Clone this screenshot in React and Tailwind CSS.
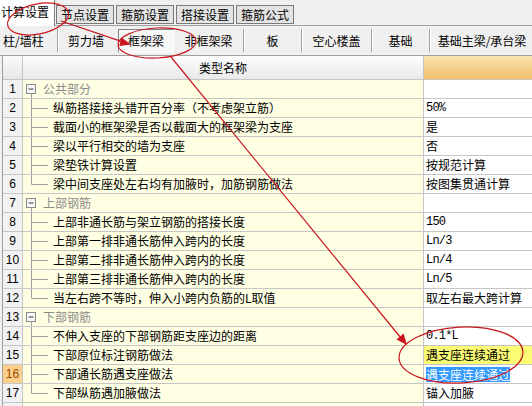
import React from 'react';

const cjk = { fontFamily: '"Noto Sans CJK SC", "Liberation Sans", sans-serif' };

const rows = [
  { n: 1, group: '公共部分' },
  { n: 2, name: '纵筋搭接接头错开百分率（不考虑架立筋）', value: '50%', latin: true },
  { n: 3, name: '截面小的框架梁是否以截面大的框架梁为支座', value: '是' },
  { n: 4, name: '梁以平行相交的墙为支座', value: '否' },
  { n: 5, name: '梁垫铁计算设置', value: '按规范计算' },
  { n: 6, name: '梁中间支座处左右均有加腋时，加筋钢筋做法', value: '按图集贯通计算', last: true },
  { n: 7, group: '上部钢筋' },
  { n: 8, name: '上部非通长筋与架立钢筋的搭接长度', value: '150', latin: true },
  { n: 9, name: '上部第一排非通长筋伸入跨内的长度', value: 'Ln/3', latin: true },
  { n: 10, name: '上部第二排非通长筋伸入跨内的长度', value: 'Ln/4', latin: true },
  { n: 11, name: '上部第三排非通长筋伸入跨内的长度', value: 'Ln/5', latin: true },
  { n: 12, name: '当左右跨不等时，伸入小跨内负筋的L取值', value: '取左右最大跨计算', last: true },
  { n: 13, group: '下部钢筋' },
  { n: 14, name: '不伸入支座的下部钢筋距支座边的距离', value: '0.1*L', latin: true },
  { n: 15, name: '下部原位标注钢筋做法', value: '遇支座连续通过', yellow: true },
  { n: 16, name: '下部通长筋遇支座做法', value: '遇支座连续通过', selected: true },
  { n: 17, name: '下部纵筋遇加腋做法', value: '锚入加腋', last: true },
];

const tabs = ['节点设置', '箍筋设置', '搭接设置', '箍筋公式'];

const Sep = () => <span className="w-px h-[23px] bg-[#a0a0a0] shadow-[1px_0_0_#ffffff]" />;

const TreeLine = ({ last }) => (
  <svg width="30" height="18" className="shrink-0">
    <line x1="8.5" y1="0" x2="8.5" y2={last ? 9.5 : 18} stroke="#a0a0a0" />
    <line x1="8.5" y1="9.5" x2="25" y2="9.5" stroke="#a0a0a0" />
  </svg>
);

const GroupBox = () => (
  <svg width="20" height="18" className="shrink-0">
    <rect x="3.5" y="4.5" width="9" height="9" fill="#f6f6f6" stroke="#8c8c8c" />
    <line x1="5.5" y1="9" x2="10.5" y2="9" stroke="#404040" />
    <line x1="8.5" y1="13.5" x2="8.5" y2="18" stroke="#a0a0a0" />
  </svg>
);

const Row = ({ r }) => (
  <div className="flex h-[19px] border-b border-[#c6c6c6]">
    <div
      className={`w-[20px] shrink-0 border-r border-[#c6c6c6] flex items-center justify-center text-[12px] ${
        r.selected ? 'bg-[#fbd08c] text-[#9a4a00]' : 'bg-[#f2f2f2] text-black'
      }`}
      style={{ fontFamily: '"Liberation Sans", sans-serif' }}
    >
      {r.n}
    </div>
    <div className="w-[401px] shrink-0 border-r border-[#c6c6c6] bg-[#ffffe3] flex items-center text-[12px] whitespace-nowrap overflow-hidden">
      {r.group ? (
        <>
          <GroupBox />
          <span className="text-[#8c8c8c]">{r.group}</span>
        </>
      ) : (
        <>
          <TreeLine last={r.last} />
          <span className="text-black">{r.name}</span>
        </>
      )}
    </div>
    <div
      className={`flex-1 flex items-center pl-[2px] text-[12px] whitespace-nowrap ${
        r.yellow ? 'bg-[#fcfc74]' : 'bg-white'
      }`}
    >
      {r.latin ? (
        <span
          className="text-black tracking-[-0.8px] text-[12px]"
          style={{ fontFamily: '"Liberation Mono", monospace' }}
        >
          {r.value}
        </span>
      ) : r.selected ? (
        <span className="bg-[#3399ff] text-white leading-[15px]">{r.value}</span>
      ) : (
        <span className="text-black">{r.value}</span>
      )}
    </div>
  </div>
);

export default function App() {
  return (
    <div className="relative w-[532px] h-[406px] overflow-hidden bg-[#f0f0f0] leading-none" style={cjk}>
      {/* tabs */}
      <div className="flex items-end h-[26px] border-b border-[#a0a0a0] text-[12px]">
        <div className="-mb-px h-[27px] w-[55px] bg-white border-r border-[#808080] flex items-center">
          <span className="pl-[1px] pb-[1px] text-black">计算设置</span>
        </div>
        {tabs.map((t, i) => (
          <div
            key={t}
            className={`h-[19px] mb-[1px] w-[58px] border border-[#7a7a7a] bg-[#e4e4e4] flex items-center justify-center text-black ${
              i === 0 ? 'ml-[1px]' : 'ml-[2px]'
            }`}
          >
            {t}
          </div>
        ))}
      </div>

      {/* toolbar */}
      <div className="flex items-center h-[30px] border-b border-[#a0a0a0] text-[12px] text-black">
        <div className="w-[57px] pl-[3px]">柱/墙柱</div>
        <Sep />
        <div className="w-[56px] text-center">剪力墙</div>
        <div className="ml-[4px] w-[56px] h-[24px] border border-t-[#808080] border-l-[#808080] border-b-[#ffffff] border-r-[#ffffff] bg-[#f7f7f7] flex items-center justify-center">
          框架梁
        </div>
        <div className="w-[69px] text-center">非框架梁</div>
        <Sep />
        <div className="w-[57px] text-center">板</div>
        <Sep />
        <div className="w-[69px] text-center">空心楼盖</div>
        <Sep />
        <div className="w-[57px] text-center">基础</div>
        <Sep />
        <div className="flex-1 text-center pl-[2px]">基础主梁/承台梁</div>
      </div>

      {/* grid */}
      <div className="ml-[2px] border-l border-[#a0a0a0]">
        <div className="flex h-[24px] border-b border-[#c6c6c6] text-[12px]">
          <div className="w-[20px] shrink-0 border-r border-[#c6c6c6] bg-gradient-to-b from-[#fafafa] to-[#e8e8e8]" />
          <div className="w-[401px] shrink-0 border-r border-[#c6c6c6] bg-gradient-to-b from-[#fdfdfd] to-[#e9e9e9] flex items-center justify-center text-black">
            类型名称
          </div>
          <div className="flex-1 bg-gradient-to-b from-[#fbe2ae] to-[#f2c06a]" />
        </div>
        {rows.map((r) => (
          <Row key={r.n} r={r} />
        ))}
        <div className="flex h-[19px]">
          <div className="w-[20px] shrink-0 border-r border-[#c6c6c6] bg-[#f2f2f2]" />
          <div className="w-[401px] shrink-0 border-r border-[#c6c6c6] bg-[#ffffe3]" />
          <div className="flex-1 bg-white" />
        </div>
      </div>

      {/* red annotations drawn over the screenshot */}
      <svg className="absolute inset-0 pointer-events-none" width="532" height="406">
        <g fill="none" stroke="#c8161e" strokeWidth="1.2">
          <ellipse cx="38" cy="19" rx="31" ry="15" transform="rotate(-12 38 19)" />
          <line x1="61" y1="21" x2="122" y2="41.6" />
          <ellipse cx="157" cy="43" rx="39" ry="15" transform="rotate(-3 157 43)" />
          <line x1="171" y1="57" x2="401" y2="338" />
          <ellipse cx="461" cy="355" rx="62" ry="28" transform="rotate(-3 461 355)" />
        </g>
        <g fill="#c8161e">
          <polygon points="131,44.5 119.3,46 121.5,37.4" />
          <polygon points="407,345 396.5,339.4 403.5,333.6" />
        </g>
      </svg>
    </div>
  );
}
